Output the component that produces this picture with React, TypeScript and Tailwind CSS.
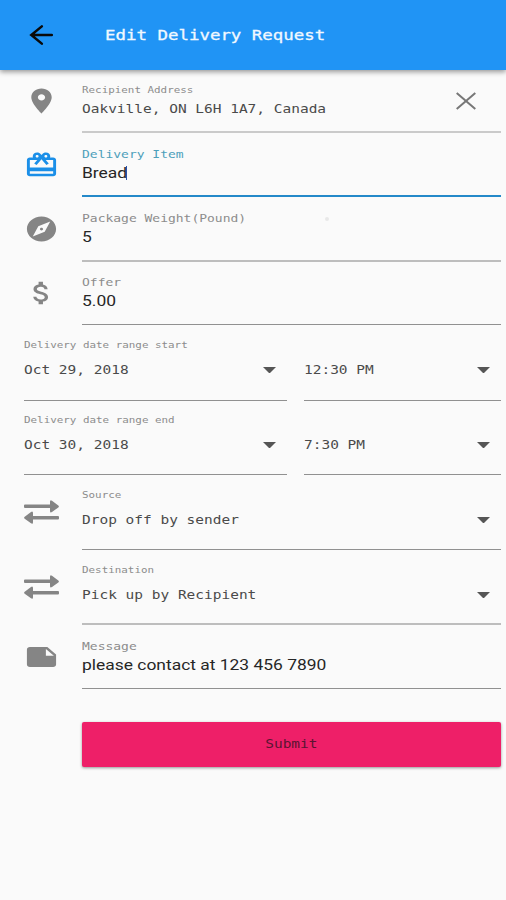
import type { ReactNode } from "react";

const mono = "font-['DejaVu_Sans_Mono','Liberation_Mono',monospace]";
const smallLabel = `${mono} block w-fit origin-left scale-x-[1.17] whitespace-nowrap text-[9.3px] leading-3 text-[#8c8c8c]`;
const floatLabel = `${mono} block w-fit origin-left scale-x-[1.17] whitespace-nowrap text-[11.1px] leading-[14px]`;
const monoValue = `${mono} block w-fit origin-left scale-x-[1.17] whitespace-nowrap text-[12.38px] leading-4 text-[#4a4a4a]`;
const inputValue =
  "block w-fit origin-left scale-x-[1.17] whitespace-nowrap font-[Roboto,sans-serif] text-[14.9px] text-[#262626]";

const paths = {
  place:
    "M12 2C8.13 2 5 5.13 5 9c0 5.25 7 13 7 13s7-7.75 7-13c0-3.87-3.13-7-7-7zm0 9.5c-1.38 0-2.5-1.12-2.5-2.5s1.12-2.5 2.5-2.5 2.5 1.12 2.5 2.5-1.12 2.5-2.5 2.5z",
  gift: "M20 6h-2.18c.11-.31.18-.65.18-1 0-1.66-1.34-3-3-3-1.05 0-1.96.54-2.5 1.35l-.5.67-.5-.68C10.96 2.54 10.05 2 9 2 7.34 2 6 3.34 6 5c0 .35.07.69.18 1H4c-1.11 0-1.99.89-1.99 2L2 19c0 1.11.89 2 2 2h16c1.11 0 2-.89 2-2V8c0-1.11-.89-2-2-2zm-5-2c.55 0 1 .45 1 1s-.45 1-1 1-1-.45-1-1 .45-1 1-1zM9 4c.55 0 1 .45 1 1s-.45 1-1 1-1-.45-1-1 .45-1 1-1zm11 15H4v-2h16v2zm0-5H4V8h5.08L7 10.83 8.62 12 11 8.76l1-1.36 1 1.36L15.38 12 17 10.83 14.92 8H20v6z",
  explore:
    "M12 10.9c-.61 0-1.1.49-1.1 1.1s.49 1.1 1.1 1.1c.61 0 1.1-.49 1.1-1.1s-.49-1.1-1.1-1.1zM12 2C6.48 2 2 6.48 2 12s4.48 10 10 10 10-4.48 10-10S17.52 2 12 2zm2.19 12.19L6 18l3.81-8.19L18 6l-3.81 8.19z",
  money:
    "M11.8 10.9c-2.27-.59-3-1.2-3-2.15 0-1.09 1.01-1.85 2.7-1.85 1.78 0 2.44.85 2.5 2.1h2.21c-.07-1.72-1.12-3.3-3.21-3.81V3h-3v2.16c-1.94.42-3.5 1.68-3.5 3.61 0 2.31 1.91 3.46 4.7 4.13 2.5.6 3 1.48 3 2.41 0 .69-.49 1.79-2.7 1.79-2.06 0-2.87-.92-2.98-2.1h-2.2c.12 2.19 1.76 3.42 3.68 3.83V21h3v-2.15c1.95-.37 3.5-1.5 3.5-3.55 0-2.84-2.43-3.81-4.7-4.4z",
  note: "M22 10l-6-6H4c-1.1 0-2 .9-2 2v12.01c0 1.1.9 1.99 2 1.99l16-.01c1.1 0 2-.89 2-2v-8zm-7-4.5l5.5 5.5H15V5.5z",
};

function Icon({ d, className }: { d: string; className: string }) {
  return (
    <svg viewBox="0 0 24 24" preserveAspectRatio="none" fill="currentColor" className={`h-[30px] w-[35px] ${className}`}>
      <path d={d} />
    </svg>
  );
}

function Swap() {
  return (
    <svg viewBox="0 0 35 24" className="mt-[25px] h-6 w-[35px] text-[#858585]" fill="currentColor">
      <path d="M1 4.600H26V1.800Q26 -.6 28 .7L34.300 5.400Q35.500 6.400 34.300 7.400L28 12.100Q26 13.300 26 10.900V8.100H1Q0 8.100 0 7.100V5.600Q0 4.600 1 4.600Z" />
      <path d="M34 16H9V13.100Q9 10.700 7 11.900L.7 16.700Q-.5 17.700.7 18.700L7 23.300Q9 24.600 9 22.200V19.500H34Q35 19.500 35 18.500V17Q35 16 34 16Z" />
    </svg>
  );
}

function Caret() {
  return (
    <svg viewBox="0 0 14 7" className="mr-[11px] h-[6.500px] w-[13px] text-[#555]" preserveAspectRatio="none" fill="currentColor">
      <path d="M0 0H14L7 7Z" />
    </svg>
  );
}

// A form row: the icon column on the left and an underlined field on the right.
function Row({ h, icon, line = "border-b border-[#909090]", children }: { h: string; icon: ReactNode; line?: string; children: ReactNode }) {
  return (
    <div className={`flex pr-[5px] ${h}`}>
      <div className="flex w-[82px] shrink-0 justify-center">{icon}</div>
      <div className={`flex-1 ${line}`}>{children}</div>
    </div>
  );
}

function Select({ value }: { value: string }) {
  return (
    <div className="flex items-center justify-between">
      <span className={monoValue}>{value}</span>
      <Caret />
    </div>
  );
}

function DateRange({ label, date, time, h, pad, timePad }: { label: string; date: string; time: string; h: string; pad: string; timePad: string }) {
  return (
    <div className={`flex gap-[17px] pl-6 pr-[5px] ${h}`}>
      <div className={`w-[263px] border-b border-[#909090] ${pad}`}>
        <span className={smallLabel}>{label}</span>
        <div className="pt-[11px]">
          <Select value={date} />
        </div>
      </div>
      <div className={`flex-1 border-b border-[#909090] ${timePad}`}>
        <Select value={time} />
      </div>
    </div>
  );
}

export default function App() {
  return (
    <div className="h-[900px] w-[506px] overflow-hidden bg-[#fafafa]">
      <header className="flex h-[70px] items-center bg-[#2094f5] shadow-[0_2px_5px_rgba(0,0,0,0.4)]">
        <svg
          viewBox="0 0 24 20"
          className="ml-[29px] h-5 w-6 shrink-0 text-[#0a0a0a]"
          fill="none"
          stroke="currentColor"
          strokeWidth="2.500"
          strokeLinecap="round"
        >
          <path d="M12.800 1.400L2.300 10L12.800 18.600M2.300 10H22.800" />
        </svg>
        <h1 className={`${mono} ml-[52px] origin-left scale-x-[1.17] whitespace-nowrap text-[14.9px] leading-5 text-[#f0f8ff] [-webkit-text-stroke:0.3px_#f0f8ff]`}>
          Edit Delivery Request
        </h1>
      </header>

      <Row h="h-[63px]" icon={<Icon d={paths.place} className="mt-[16px] text-[#858585]" />} line="border-b-2 border-[#cacaca]">
        <div className="flex justify-between">
          <div className="pt-[14px]">
            <span className={smallLabel}>Recipient Address</span>
            <span className={`${monoValue} mt-[5px]`}>Oakville, ON L6H 1A7, Canada</span>
          </div>
          <svg
            viewBox="0 0 20 18"
            className="mr-[25px] mt-[22px] h-[18px] w-5 text-[#777]"
            fill="none"
            stroke="currentColor"
            strokeWidth="2"
          >
            <path d="M.7 1L19.300 17M19.300 1L.7 17" />
          </svg>
        </div>
      </Row>

      <Row h="h-[64px]" icon={<Icon d={paths.gift} className="mt-[17px] text-[#1b8fe8]" />} line="border-b-2 border-[#2489c9]">
        <span className={`${floatLabel} mt-[15px] text-[#4d9fba]`}>Delivery Item</span>
        <div className="flex items-center pt-1">
          <span className={`${inputValue} -mr-px leading-[14px]`}>Bread</span>
          <span className="ml-[6px] h-[14px] w-[1.500px] bg-[#2b55a8]" />
        </div>
      </Row>

      <Row h="h-[65px]" icon={<Icon d={paths.explore} className="mt-[17px] text-[#858585]" />} line="border-b-2 border-[#bdbdbd]">
        <div className="flex items-center pt-[15px]">
          <span className={`${floatLabel} shrink-0 text-[#8c8c8c]`}>Package Weight(Pound)</span>
          <span className="ml-[103px] h-1 w-1 rounded-full bg-[#e8e8e8]" />
        </div>
        <span className={`${inputValue} pt-px leading-5`}>5</span>
      </Row>

      <Row h="h-[63px]" icon={<Icon d={paths.money} className="mt-[16px] text-[#858585]" />}>
        <span className={`${floatLabel} mt-[14px] text-[#8c8c8c]`}>Offer</span>
        <span className={`${inputValue} pt-px leading-5`}>5.00</span>
      </Row>

      <DateRange h="h-[76px]" pad="pt-[14px]" timePad="pt-[37px]" label="Delivery date range start" date="Oct 29, 2018" time="12:30 PM" />
      <DateRange h="h-[74px]" pad="pt-[13px]" timePad="pt-[36px]" label="Delivery date range end" date="Oct 30, 2018" time="7:30 PM" />

      <Row h="h-[75px]" icon={<Swap />}>
        <span className={`${smallLabel} mt-[14px] mb-[11px]`}>Source</span>
        <Select value="Drop off by sender" />
      </Row>
      <Row h="h-[75px]" icon={<Swap />} line="border-b-2 border-[#bdbdbd]">
        <span className={`${smallLabel} mt-[14px] mb-[11px]`}>Destination</span>
        <Select value="Pick up by Recipient" />
      </Row>
      <Row h="h-[64px]" icon={<Icon d={paths.note} className="mt-[17px] text-[#858585]" />}>
        <span className={`${floatLabel} mt-[15px] text-[#8c8c8c]`}>Message</span>
        <span className={`${inputValue} pt-px leading-5`}>please contact at 123 456 7890</span>
      </Row>

      <button
        type="button"
        className="ml-[82px] mt-[32.500px] flex h-[45px] w-[419px] items-center justify-center rounded-[2px] bg-[#ee1f68] shadow-[0_1px_3px_rgba(0,0,0,0.4)]"
      >
        <span className={`${mono} scale-x-[1.17] text-[12.38px] leading-4 text-[#5c1432]`}>Submit</span>
      </button>
    </div>
  );
}
